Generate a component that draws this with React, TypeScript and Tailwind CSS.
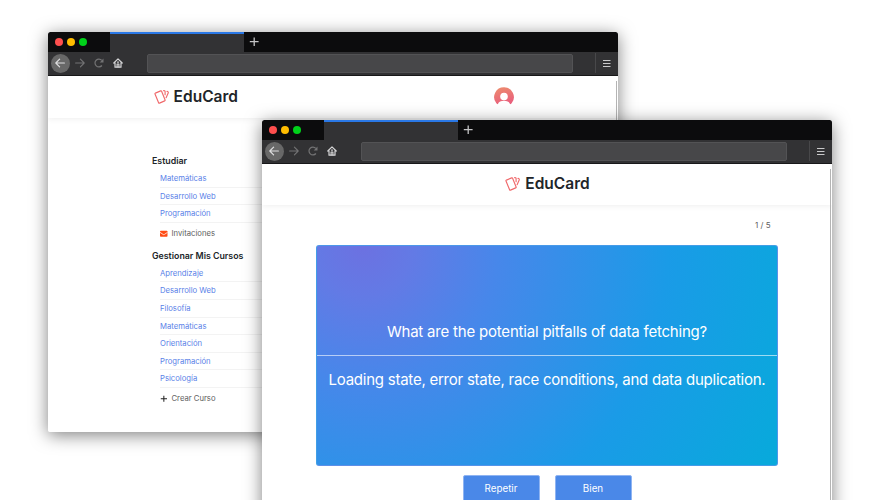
import type { ReactNode } from "react";

function BrowserChrome() {
  return (
    <div className="shrink-0">
      <div className="flex h-[19.5px] bg-[#0c0c0d]">
        <div className="flex w-[62.4px] items-center gap-1 pl-[7.3px]">
          <span className="size-2 rounded-full bg-[#ff4f4e]" />
          <span className="size-2 rounded-full bg-[#ffbd00]" />
          <span className="size-2 rounded-full bg-[#00d21a]" />
        </div>
        <div className="w-[133.6px] border-t-2 border-[#2a78e6] bg-[#323234]" />
        <svg className="ml-[5px] mt-[5px] size-[10px]" viewBox="0 0 10 10" stroke="#c4c4c5" strokeWidth="1.3">
          <path d="M.8 4.7h8.8M5.2 .4v8.6" />
        </svg>
      </div>
      <div className="flex h-[24.5px] items-center border-b border-[#19191a] bg-[#323234] pl-[2.5px]">
        <span className="flex size-[19px] items-center justify-center rounded-full bg-[#686868]">
          <svg className="size-[10px]" viewBox="0 0 10 10" fill="none" stroke="#dededf" strokeWidth="1.2" strokeLinecap="round" strokeLinejoin="round">
            <path d="M9.4 5H.8M4.6 1.2L.8 5l3.8 3.8" />
          </svg>
        </span>
        <svg className="ml-[5px] size-[10px]" viewBox="0 0 10 10" fill="none" stroke="#737374" strokeWidth="1.1" strokeLinecap="round" strokeLinejoin="round">
          <path d="M.6 5h8.6M5.4 1.2L9.2 5 5.4 8.8" />
        </svg>
        <svg className="ml-[9px] size-[10px]" viewBox="0 0 10 10" fill="none" stroke="#737374" strokeWidth="1.2">
          <path d="M7.9 7.5A3.9 3.9 0 1 1 7.8 2.4" />
          <path d="M9.5.6v3.8H5.7z" fill="#737374" stroke="none" />
        </svg>
        <svg className="ml-[9.2px] size-[10px]" viewBox="0 0 10 10" fill="none" stroke="#d6d6d7" strokeWidth="1.2" strokeLinecap="round" strokeLinejoin="round">
          <path d="M.8 5L5 .9 9.2 5M2 4.8v4.4h6V4.8" />
          <path d="M4.1 9V6h1.8v3M4.5 4.1h1" />
        </svg>
        <div className="ml-[24.3px] h-[19px] w-[426px] rounded-[2px] border border-[#535355] bg-[#474749]" />
        <div className="ml-[21.6px] h-[20px] w-[1.5px] bg-[#48484a]" />
        <svg className="ml-[7px] size-[8px]" viewBox="0 0 8 8" stroke="#c9c9ca" strokeWidth="1.1">
          <path d="M0 1.5h7.5M0 4.5h7.5M0 7.5h7.5" />
        </svg>
      </div>
    </div>
  );
}

function BrowserWindow({ className, children }: { className: string; children: ReactNode }) {
  return (
    <section className={`absolute h-[400px] w-[570px] rounded-[2.5px] shadow-[0_3px_17px_rgba(0,0,0,0.5)] ${className}`}>
      <div className="flex h-full flex-col overflow-hidden rounded-[2.5px] bg-white">
        <BrowserChrome />
        {children}
      </div>
      <span className="absolute bottom-0 right-[1px] top-[49px] w-px bg-[#b4b4b4]" />
    </section>
  );
}

function Logo() {
  return (
    <div className="flex items-center gap-[4px]">
      <svg className="size-[16px]" viewBox="0 0 16 16" fill="none" stroke="#f06a6c" strokeWidth="1.15" strokeLinecap="round" strokeLinejoin="round">
        <path d="M1.4 4.1L6.7 1.9a.7.7 0 0 1 .9.4l3.5 8.7a.7.7 0 0 1-.4.9L5.5 14.1a.7.7 0 0 1-.9-.4L1 5a.7.7 0 0 1 .4-.9z" />
        <path d="M9.6 1.6h.6a.9.9 0 0 1 .9.9v3.2" />
        <path d="M13 2.4l.9.4a.8.8 0 0 1 .4 1l-2.2 4.9" />
      </svg>
      <span className="text-[15.5px] font-semibold leading-5 text-[#212529]">EduCard</span>
    </div>
  );
}

function Avatar() {
  return (
    <svg className="size-5" viewBox="0 0 20 20">
      <defs>
        <linearGradient id="avatar" x1="0" y1="0" x2="0.3" y2="1">
          <stop offset="0" stopColor="#ed8e6d" />
          <stop offset="1" stopColor="#e9617c" />
        </linearGradient>
      </defs>
      <path fill="url(#avatar)" d="M10 .2a9.8 9.8 0 0 0-7.8 15.8q.5.8 1.6 1.2C4.8 14.8 7 13.8 10 13.8s5.2 1 6.2 3.4q1.1-.4 1.6-1.2A9.8 9.8 0 0 0 10 .2z" />
      <circle cx="10" cy="9.5" r="3.8" fill="#fff" />
    </svg>
  );
}

function CourseList({ title, courses, children }: { title: string; courses: string[]; children: ReactNode }) {
  return (
    <div>
      <h2 className="h-[18px] text-[8.8px] font-semibold leading-[18px] text-[#212529]">{title}</h2>
      <ul className="pl-2">
        {courses.map((course) => (
          <li key={course} className="h-[17.6px] border-b border-[#f3f3f3] text-[7.7px] leading-[18.6px] text-[#5a7fe8]">
            {course}
          </li>
        ))}
        <li className="flex h-[20.4px] items-center pt-[0.7px] text-[7.7px] text-[#606060]">{children}</li>
      </ul>
    </div>
  );
}

export default function App() {
  return (
    <main className="relative h-[500px] w-[880px] overflow-hidden bg-white font-['Inter',sans-serif]">
      <BrowserWindow className="left-[48px] top-[32px]">
        <header className="flex h-[42px] shrink-0 items-center justify-between pl-[105.6px] pr-[104px] shadow-[0_1px_6px_rgba(0,0,0,0.07)]">
          <Logo />
          <Avatar />
        </header>
        <nav className="ml-[104px] mt-[34px] flex flex-col gap-[3.7px]">
          <CourseList title="Estudiar" courses={["Matemáticas", "Desarrollo Web", "Programación"]}>
            <svg className="mr-[4px] size-[7.5px]" viewBox="0 0 8 8">
              <rect y=".9" width="8" height="6.4" rx=".8" fill="#ff4b14" />
              <path d="M0 2.5l3.3 2.2q.7.5 1.4 0L8 2.5" fill="none" stroke="#fff" strokeWidth=".8" />
            </svg>
            Invitaciones
          </CourseList>
          <CourseList
            title="Gestionar Mis Cursos"
            courses={["Aprendizaje", "Desarrollo Web", "Filosofía", "Matemáticas", "Orientación", "Programación", "Psicología"]}
          >
            <svg className="mr-[4px] size-[7.5px]" viewBox="0 0 8 8" stroke="#222" strokeWidth="1.1">
              <path d="M.8 4h6.7M4.1 .7v6.6" />
            </svg>
            Crear Curso
          </CourseList>
        </nav>
      </BrowserWindow>

      <BrowserWindow className="left-[262px] top-[120px]">
        <header className="flex h-[41px] shrink-0 items-center justify-center pb-[2px] pl-[1px] shadow-[0_1px_6px_rgba(0,0,0,0.07)]">
          <Logo />
        </header>
        <div className="mx-[54px] flex flex-col">
          <p className="mt-[14px] h-[12px] pr-[7.5px] text-right text-[8px] leading-[12px] text-[#606060]">1 / 5</p>
          <article className="mt-[14px] flex h-[221px] flex-col rounded-[3px] border border-[#5a9aea]/70 bg-[radial-gradient(circle_at_10%_0%,#6c71e1_0,#637ae5_50px,#4787ea_135px,#1a9be7_305px,#06abda_480px)] text-center text-white">
            <div className="flex flex-1 items-end justify-center border-b border-white/60 pb-[11px] text-[15px] leading-6 tracking-[-0.2px]">
              What are the potential pitfalls of data fetching?
            </div>
            <div className="flex flex-1 items-start justify-center whitespace-nowrap pt-[12px] text-[15px] leading-6 tracking-[-0.24px]">
              Loading state, error state, race conditions, and data duplication.
            </div>
          </article>
          <div className="mt-[9px] flex justify-center gap-[15px]">
            <button className="h-[30px] w-[77px] rounded-[2px] border border-[#8fb4f2] bg-[#4a88e8] pb-[2px] text-[9.8px] text-white">Repetir</button>
            <button className="h-[30px] w-[77px] rounded-[2px] border border-[#8fb4f2] bg-[#4a88e8] pb-[2px] text-[9.8px] text-white">Bien</button>
          </div>
        </div>
      </BrowserWindow>
    </main>
  );
}
